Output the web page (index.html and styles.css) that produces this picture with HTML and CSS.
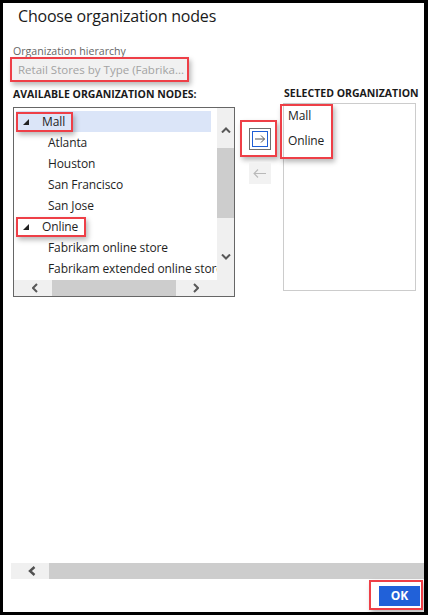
FILE: index.html
```html
<!DOCTYPE html>
<html lang="en">
<head>
<meta charset="utf-8">
<title>Choose organization nodes</title>
<link rel="stylesheet" href="styles.css">
</head>
<body>
<div class="dialog">
  <h1 class="title">Choose organization nodes</h1>

  <div class="field">
    <div class="field-label">Organization hierarchy</div>
    <div class="input mark">Retail Stores by Type (Fabrika...</div>
  </div>

  <div class="transfer">
    <div class="col-left">
      <div class="col-label">AVAILABLE ORGANIZATION NODES:</div>
      <div class="tree-box">
        <div class="tree-main">
          <div class="tree-rows">
            <div class="row selected">
              <span class="node mark"><svg class="tri" width="6" height="6" viewBox="0 0 6 6"><polygon points="6,0 6,6 0,6"/></svg>Mall</span>
            </div>
            <div class="row child">Atlanta</div>
            <div class="row child">Houston</div>
            <div class="row child">San Francisco</div>
            <div class="row child">San Jose</div>
            <div class="row">
              <span class="node mark"><svg class="tri" width="6" height="6" viewBox="0 0 6 6"><polygon points="6,0 6,6 0,6"/></svg>Online</span>
            </div>
            <div class="row child">Fabrikam online store</div>
            <div class="row child">Fabrikam extended online store</div>
          </div>
          <div class="vscroll">
            <div class="vs-up"><svg width="10" height="6" viewBox="0 0 10 6"><polyline class="chev" points="1,5.5 5,1.5 9,5.5"/></svg></div>
            <div class="vs-thumb"></div>
            <div class="vs-track"></div>
            <div class="vs-down"><svg width="10" height="6" viewBox="0 0 10 6"><polyline class="chev" points="1,0.5 5,4.5 9,0.5"/></svg></div>
            <div class="vs-rest"></div>
          </div>
        </div>
        <div class="tree-hscroll">
          <div class="hs-left"><svg width="6" height="10" viewBox="0 0 6 10"><polyline class="chev" points="5,1 1,5 5,9"/></svg></div>
          <div class="hs-thumb"></div>
          <div class="hs-right"><svg width="6" height="10" viewBox="0 0 6 10"><polyline class="chev" points="1,1 5,5 1,9"/></svg></div>
          <div class="hs-corner"></div>
        </div>
      </div>
    </div>

    <div class="col-mid">
      <div class="add-wrap mark">
        <button class="btn-add" type="button" aria-label="Add">
          <svg width="20" height="20" viewBox="0 0 20 20">
            <rect x="2.5" y="2.5" width="15" height="15" fill="none" stroke="#1f5fd6" stroke-width="1"/>
            <path d="M5 10 H14.5 M11 6.5 L14.5 10 L11 13.5" fill="none" stroke="#555" stroke-width="1"/>
          </svg>
        </button>
      </div>
      <button class="btn-remove" type="button" aria-label="Remove">
        <svg width="22" height="21" viewBox="0 0 22 21">
          <path d="M5 10.5 H17 M9 6.5 L5 10.5 L9 14.5" fill="none" stroke="#b9b9b9" stroke-width="1.1"/>
        </svg>
      </button>
    </div>

    <div class="col-right">
      <div class="col-label sel-label">SELECTED ORGANIZATION</div>
      <div class="sel-box">
        <div class="sel-mark mark">
          <div class="sel-item">Mall</div>
          <div class="sel-item second">Online</div>
        </div>
      </div>
    </div>
  </div>

  <div class="spacer"></div>

  <div class="hbar">
    <div class="hbar-btn"><svg width="8" height="10" viewBox="0 0 8 10"><polyline class="chev bold" points="6.5,1 2,5 6.5,9"/></svg></div>
    <div class="hbar-thumb"></div>
  </div>

  <div class="footer">
    <div class="ok-wrap mark">
      <button class="ok" type="button">OK</button>
    </div>
  </div>
</div>
</body>
</html>
```

FILE: styles.css
```css
* {
  box-sizing: border-box;
}

html,
body {
  margin: 0;
  padding: 0;
  background: #fff;
}

body {
  font-family: "Open Sans", "Noto Sans", sans-serif;
  color: #1e1e1e;
}

.dialog {
  width: 428px;
  height: 615px;
  border-style: solid;
  border-color: #000;
  border-width: 3px 4px 3px 3px;
  display: flex;
  flex-direction: column;
  overflow: hidden;
  background: #fff;
}

.mark {
  outline: 2px solid #ee3f47;
  box-shadow: 2px 3px 5px 2px rgba(0, 0, 0, 0.28);
}

.title {
  margin: 0;
  padding: 3px 0 0 15px;
  font-size: 16px;
  line-height: 20px;
  font-weight: 400;
  color: #1a1a1a;
  letter-spacing: -0.2px;
}

.field {
  margin-top: 18px;
  padding-left: 10px;
}

.field-label {
  font-size: 10.6px;
  line-height: 14px;
  color: #666;
}

.input {
  margin-top: 1px;
  margin-left: -1px;
  width: 175px;
  height: 21px;
  line-height: 21px;
  padding-left: 6px;
  background: #f1f1f1;
  color: #a3a3a3;
  font-size: 11.5px;
  white-space: nowrap;
  overflow: hidden;
}

/* transfer area */
.transfer {
  display: flex;
  margin-top: 6px;
  height: 211px;
}

.col-left {
  width: 232px;
  padding: 1px 0 0 10px;
}

.col-label {
  font-size: 10.5px;
  line-height: 14px;
  font-weight: 700;
  color: #1a1a1a;
  white-space: nowrap;
}

.tree-box {
  margin-top: 6px;
  width: 222px;
  height: 190px;
  border: 1px solid #666;
  display: flex;
  flex-direction: column;
}

.tree-main {
  display: flex;
  height: 172px;
}

.tree-rows {
  flex: 1;
  padding: 3px 0 0 2px;
  overflow: hidden;
}

.row {
  height: 21px;
  margin-right: 6px;
  display: flex;
  align-items: center;
  font-size: 12px;
  letter-spacing: -0.1px;
  white-space: nowrap;
  color: #1e1e1e;
}

.row.child {
  padding-left: 32px;
}

.row.selected {
  background: #dbe5f8;
}

.node {
  display: flex;
  align-items: center;
  height: 16px;
  margin-left: 2px;
  padding: 0 6px 0 5px;
}

.tri {
  margin-right: 13px;
  fill: #222;
}

.chev {
  fill: none;
  stroke: #585858;
  stroke-width: 2;
}

.chev.bold {
  stroke: #505050;
  stroke-width: 2.4;
}

.vscroll {
  width: 17px;
  background: #f0f0f0;
  display: flex;
  flex-direction: column;
}

.vs-up {
  height: 40px;
  padding-top: 4px;
  display: flex;
  align-items: center;
  justify-content: center;
}

.vs-thumb {
  height: 70px;
  background: #cdcdcd;
}

.vs-track {
  height: 24px;
}

.vs-down {
  height: 30px;
  display: flex;
  align-items: center;
  justify-content: center;
}

.vs-rest {
  flex: 1;
}

.tree-hscroll {
  display: flex;
  height: 16px;
  background: #f0f0f0;
}

.hs-left {
  width: 38px;
  padding-left: 4px;
  display: flex;
  align-items: center;
  justify-content: center;
}

.hs-thumb {
  width: 124px;
  background: #cdcdcd;
}

.hs-right {
  width: 40px;
  display: flex;
  align-items: center;
  justify-content: center;
}

.hs-corner {
  flex: 1;
}

/* middle buttons */
.col-mid {
  width: 48px;
  padding-left: 7px;
  display: flex;
  flex-direction: column;
  align-items: flex-start;
}

.add-wrap {
  margin-top: 36px;
  padding: 6px 4px 5px 7px;
}

.btn-add {
  width: 22px;
  height: 22px;
  padding: 0;
  margin: 0;
  border: 1px solid #6e6e6e;
  background: #fff;
  display: flex;
  align-items: center;
  justify-content: center;
}

.btn-remove {
  width: 22px;
  height: 21px;
  margin: 8px 0 0 7px;
  padding: 0;
  border: none;
  background: #f2f2f2;
  display: flex;
  align-items: center;
  justify-content: center;
}

/* selected list */
.col-right {
  flex: 1;
  min-width: 0;
}

.sel-label {
  padding-left: 1px;
  overflow: hidden;
}

.sel-box {
  margin-top: 3px;
  width: 133px;
  height: 188px;
  border: 1px solid #cccccc;
  padding-top: 2px;
}

.sel-mark {
  width: 49px;
  margin-left: -2px;
  padding-bottom: 6px;
}

.sel-item {
  padding-left: 6px;
  font-size: 12px;
  line-height: 20px;
  letter-spacing: -0.1px;
  color: #222;
  white-space: nowrap;
}

.sel-item.second {
  margin-top: 5px;
}

/* bottom */
.spacer {
  flex: 1;
}

.hbar {
  display: flex;
  height: 16px;
  margin-left: 8px;
}

.hbar-btn {
  width: 38px;
  padding-left: 4px;
  background: #f0f0f0;
  display: flex;
  align-items: center;
  justify-content: center;
}

.hbar-thumb {
  flex: 1;
  background: #cdcdcd;
}

.footer {
  display: flex;
  justify-content: flex-end;
  padding: 3px 3px 4px 0;
}

.ok-wrap {
  padding: 4px 1px 2px 8px;
}

.ok {
  display: block;
  width: 41px;
  height: 20px;
  margin: 0;
  padding: 0;
  border: none;
  background: #2161d9;
  color: #fff;
  font-family: "Open Sans", "Noto Sans", sans-serif;
  font-size: 12px;
  font-weight: 700;
  line-height: 20px;
}
```
